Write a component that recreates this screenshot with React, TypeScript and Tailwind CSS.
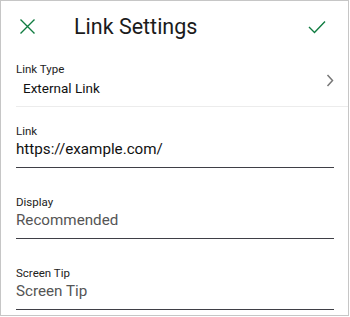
export default function App() {
  const fields = [
    { label: "Link", value: "https://example.com/", filled: true },
    { label: "Display", value: "Recommended", filled: false },
    { label: "Screen Tip", value: "Screen Tip", filled: false },
  ]

  return (
    <div className="w-[350px] h-[317px] bg-white" style={{ fontFamily: "Roboto, 'Noto Sans', sans-serif" }}>
      <div className="w-[349px] h-[316px] border border-[#c6c6c6] flex flex-col">
        {/* Header */}
        <div className="h-[50px] flex items-center pl-[18px] pr-[22px]">
          <svg width="17" height="17" viewBox="0 0 17 17" className="shrink-0">
            <path d="M1.5 1.5 L15.5 15.5 M15.5 1.5 L1.5 15.5" stroke="#107c41" strokeWidth="1.4" fill="none" />
          </svg>
          <h1 className="ml-[38px] text-[21.5px] leading-[28px] text-[#1b1b1b] flex-1 mt-[1px]">Link Settings</h1>
          <svg width="18" height="14" viewBox="0 0 18 14" className="shrink-0 mt-[2px]">
            <path d="M1 7 L6.5 12.5 L17 1.5" stroke="#107c41" strokeWidth="1.4" fill="none" />
          </svg>
        </div>

        {/* Link Type row */}
        <div className="ml-[15px] border-b border-[#ececec] flex items-center pr-[14px] pt-[11px] pb-[8px]">
          <div className="flex-1">
            <div className="text-[11.5px] leading-[14px] text-[#222]">Link Type</div>
            <div className="pl-[7px] text-[13.5px] leading-[20px] text-[#111] mt-[2px]">External Link</div>
          </div>
          <svg width="8" height="13" viewBox="0 0 8 13" className="shrink-0">
            <path d="M1.5 1 L6.5 6.5 L1.5 12" stroke="#777" strokeWidth="1.5" fill="none" />
          </svg>
        </div>

        {/* Fields */}
        <div className="pl-[15px] pr-[14px] pt-[17px] flex flex-col gap-[27px]">
          {fields.map((f, i) => (
            <div key={i} className="border-b border-[#3f3f46] pb-[8px]">
              <div className="text-[11.5px] leading-[14px] text-[#222]">{f.label}</div>
              <div className={`mt-[1px] text-[15.2px] leading-[20px] ${f.filled ? "text-[#111]" : "text-[#555]"}`}>{f.value}</div>
            </div>
          ))}
        </div>
      </div>
    </div>
  )
}
